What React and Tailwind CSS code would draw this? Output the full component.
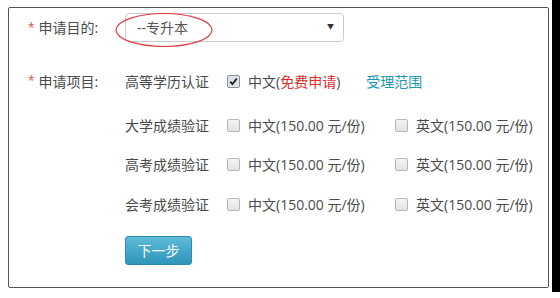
const font = { fontFamily: '"Open Sans", "Noto Sans CJK SC", sans-serif' }

function Box({ checked }) {
  if (checked) {
    return (
      <span className="flex h-[13px] w-[13px] items-center justify-center rounded-[2px] border border-[#8a8f99] bg-[#dfe3ea]">
        <svg width="9" height="9" viewBox="0 0 9 9">
          <path d="M1.2 4.6 L3.4 7 L7.8 1.6" fill="none" stroke="#222" strokeWidth="1.8" />
        </svg>
      </span>
    )
  }
  return <span className="h-[13px] w-[13px] rounded-[2px] border border-[#b5b5b5] bg-gradient-to-b from-[#f4f4f4] to-[#e2e2e2]" />
}

function Option({ label, checked, children }) {
  return (
    <div className="flex items-center gap-[8px]">
      <Box checked={checked} />
      <span>{children || label}</span>
    </div>
  )
}

function ItemRow({ title, top, children }) {
  return (
    <div className={`flex h-[20px] items-center ${top}`}>
      <div className="w-[116px]" />
      <div className="w-[102px] shrink-0">{title}</div>
      {children}
    </div>
  )
}

export default function App() {
  const price = '(150.00 元/份)'
  return (
    <div className="flex h-[298px] w-[560px] bg-white text-[14px] text-[#4a4a4a]" style={font}>
      <div className="w-[552px] pl-[8px] pt-[7px]">
        <div className="relative h-[281px] w-[541px] rounded-[2px] border-[1.5px] border-[#555] bg-white">
          {/* row 1 */}
          <div className="mt-[5px] flex h-[29px] items-center">
            <div className="flex w-[116px] items-center pl-[19px]">
              <span className="mr-[4px] text-[12px] text-[#d9534f]">*</span>
              <span>申请目的:</span>
            </div>
            <div className="flex h-[29px] w-[219px] items-center justify-between rounded-[4px] border border-[#ccc] pl-[11px] pr-[9px] text-[#555]">
              <span>--专升本</span>
              <span className="text-[7px] text-[#333]">▼</span>
            </div>
          </div>
          <svg className="absolute left-[105px] top-[4px]" width="100" height="36" viewBox="0 0 100 36">
            <ellipse cx="50" cy="18" rx="48" ry="16.5" fill="none" stroke="#e0393e" strokeWidth="1.2" />
          </svg>

          {/* row 2 */}
          <div className="mt-[29px] flex h-[20px] items-center">
            <div className="flex w-[116px] items-center pl-[19px]">
              <span className="mr-[4px] text-[12px] text-[#d9534f]">*</span>
              <span>申请项目:</span>
            </div>
            <div className="w-[102px] shrink-0">高等学历认证</div>
            <Option checked>
              中文(<span className="text-[#e02a2a]">免费申请</span>)
            </Option>
            <span className="ml-[26px] text-[#1f96b3]">受理范围</span>
          </div>

          <ItemRow title="大学成绩验证" top="mt-[24px]">
            <div className="w-[168px]"><Option label={'中文' + price} /></div>
            <Option label={'英文' + price} />
          </ItemRow>
          <ItemRow title="高考成绩验证" top="mt-[19px]">
            <div className="w-[168px]"><Option label={'中文' + price} /></div>
            <Option label={'英文' + price} />
          </ItemRow>
          <ItemRow title="会考成绩验证" top="mt-[20px]">
            <div className="w-[168px]"><Option label={'中文' + price} /></div>
            <Option label={'英文' + price} />
          </ItemRow>

          <div className="mt-[22px] pl-[116px]">
            <button className="flex h-[29px] w-[67px] items-center justify-center rounded-[3px] border border-[#2c8db1] bg-gradient-to-b from-[#5cbcd9] to-[#2e95b9] text-[14px] text-white">
              下一步
            </button>
          </div>
        </div>
      </div>
      <div className="h-[292px] w-[8px] bg-black" />
    </div>
  )
}
